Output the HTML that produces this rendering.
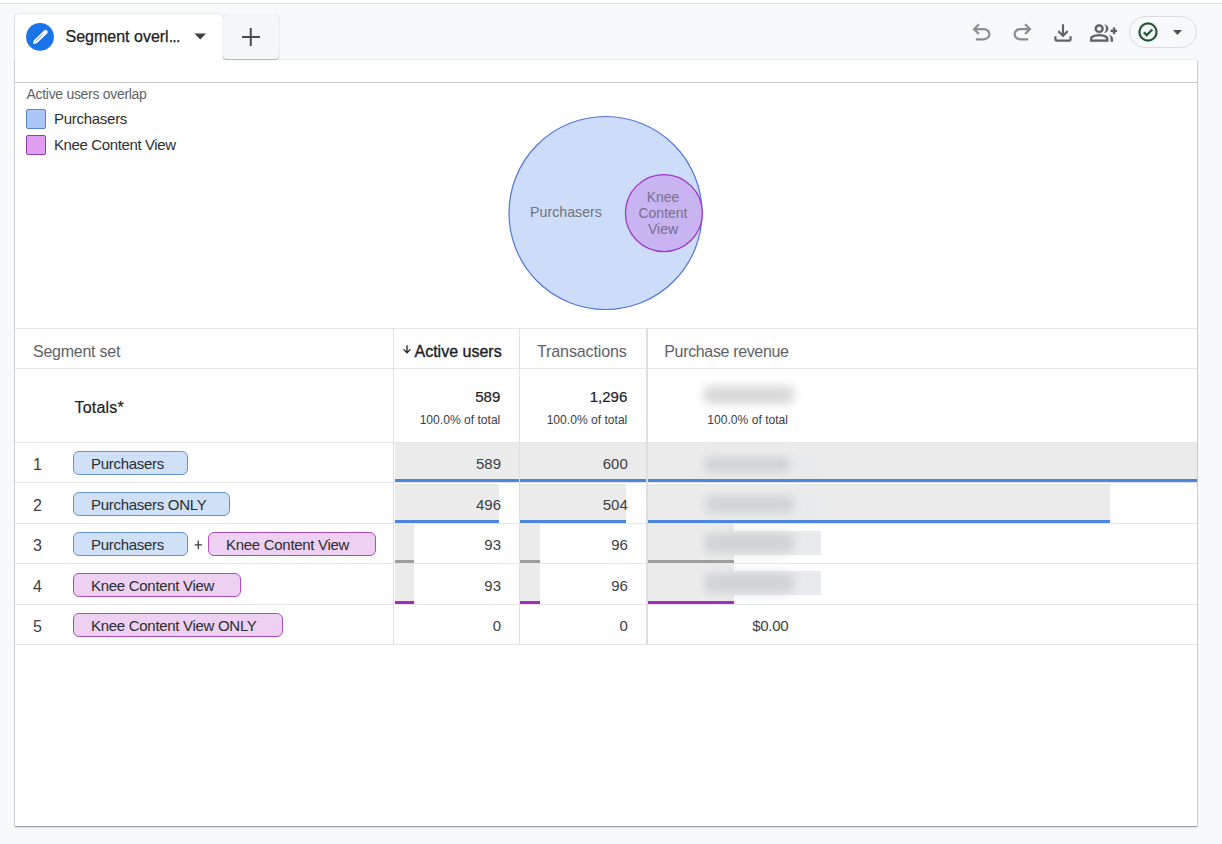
<!DOCTYPE html>
<html><head><meta charset="utf-8">
<style>
*{box-sizing:border-box;margin:0;padding:0}
html,body{width:1222px;height:844px;overflow:hidden}
body{background:#f8f9fa;font-family:"Liberation Sans",sans-serif;color:#202124;position:relative}
.abs{position:absolute}
#topwhite{left:0;top:0;width:1222px;height:3px;background:#fff}
#topline{left:0;top:3px;width:1222px;height:1px;background:#dadce0}
#tab{left:15px;top:14px;width:208px;height:46px;background:#fff;border-radius:4px 4px 0 0;box-shadow:-1px 0 0 rgba(60,64,67,.14),0 -1px 0 rgba(60,64,67,.07),1px 0 0 rgba(60,64,67,.05)}
#plus{left:223px;top:15px;width:56px;height:44px;background:#f6f7f8;border-radius:4px;box-shadow:0 0 1px rgba(60,64,67,.3),0 1px 1px rgba(60,64,67,.3)}
#card{left:15px;top:60px;width:1182px;height:766px;background:#fff;box-shadow:0 1px 1px rgba(60,64,67,.45),0 2px 2px rgba(60,64,67,.06),0 -1px 1px rgba(60,64,67,.05),-1px 0 0 rgba(60,64,67,.14),1px 0 0 rgba(60,64,67,.14)}
.t{position:absolute;white-space:nowrap;line-height:1}
.hl{position:absolute;height:1px;background:#e6e6e6}
.vl{position:absolute;width:1px;background:#e0e0e0}
.chip{position:absolute;height:23.3px;border-radius:6px;font-size:15px;letter-spacing:-0.3px;line-height:23px;padding-left:16.7px;color:#2a2d31;white-space:nowrap}
.cb{background:#d0e0f6;border:1px solid #6490da}
.cp{background:#edd0f2;border:1px solid #ad4ac6}
.num{position:absolute;font-size:15px;line-height:1;text-align:right;white-space:nowrap;color:#3c4043}
.bar{position:absolute;background:#ebebeb}
.blur{position:absolute;background:#e8eaed}
.blur i{position:absolute;left:4px;right:27px;top:2px;bottom:2px;background:#d1d3d6;filter:blur(4.5px);border-radius:8px}
</style></head><body>
<div class="abs" id="topwhite"></div>
<div class="abs" id="topline"></div>
<div class="abs" id="card"></div>

<!-- tab -->
<div class="abs" id="tab"></div>
<div class="abs" id="plus"></div>
<svg class="abs" style="left:26px;top:23px" width="28" height="28" viewBox="0 0 28 28">
  <circle cx="14" cy="13.9" r="13.9" fill="#1a73e8"/>
  <path d="M21.06 10.41 L10.82 20.21 L7.0 21.1 L7.9 17.19 L18.14 7.39 A2.1 2.1 0 0 1 21.06 10.41Z" fill="#fff"/>
  <path d="M9.4 18.3 L16.3 11.6" stroke="#5a6fb0" stroke-width="0.8"/>
</svg>
<div class="t" style="left:65.5px;top:28.5px;font-size:16px;color:#202124;-webkit-text-stroke:0.25px #202124">Segment overl<span style="letter-spacing:-0.8px">...</span></div>
<svg class="abs" style="left:194px;top:33px" width="13" height="7" viewBox="0 0 13 7"><path d="M0.5 0.5h11.5l-5.75 6z" fill="#3c4043"/></svg>
<svg class="abs" style="left:241px;top:27px" width="20" height="20" viewBox="0 0 20 20"><path d="M9.75 1v18M1 10h18" stroke="#474b4f" stroke-width="2"/></svg>

<!-- toolbar icons -->
<svg class="abs" style="left:968.4px;top:19.2px" width="27" height="27" viewBox="0 -960 960 960"><path fill="#8b8d90" d="M280-200v-80h284q63 0 109.5-40T720-420q0-60-46.5-100T564-560H312l104 104-56 56-200-200 200-200 56 56-104 104h252q97 0 166.5 63T800-420q0 94-69.5 157T564-200H280Z"/></svg>
<svg class="abs" style="left:1009px;top:19.2px" width="27" height="27" viewBox="0 -960 960 960"><path fill="#8b8d90" d="M396-200q-97 0-166.5-63T160-420q0-94 69.5-157T396-640h252L544-744l56-56 200 200-200 200-56-56 104-104H396q-63 0-109.5 40T240-420q0 60 46.5 100T396-280h284v80H396Z"/></svg>
<svg class="abs" style="left:1050px;top:19.7px" width="26" height="26" viewBox="0 -960 960 960"><path fill="#5f6368" d="M480-320 280-520l56-58 104 104v-326h80v326l104-104 56 58-200 200ZM240-160q-33 0-56.5-23.5T160-240v-120h80v120h480v-120h80v120q0 33-23.5 56.5T720-160H240Z"/></svg>
<svg class="abs" style="left:1089.8px;top:19.5px" width="27.5" height="26" viewBox="0 -960 960 960" preserveAspectRatio="none"><path fill="#5f6368" stroke="#5f6368" stroke-width="6" d="M500-482q29-32 44.5-73t15.5-85q0-44-15.5-85T500-798q60 8 100 53t40 105q0 60-40 105t-100 53Zm220 322v-120q0-36-16-68.5T662-406q51 18 94.5 46.5T800-280v120h-80Zm80-280v-80h-80v-80h80v-80h80v80h80v80h-80v80h-80Zm-480-40q-66 0-113-47t-47-113q0-66 47-113t113-47q66 0 113 47t47 113q0 66-47 113t-113 47ZM0-160v-112q0-34 17.5-62.5T64-378q62-31 126-46.5T320-440q66 0 130 15.5T576-378q29 15 46.5 43.5T640-272v112H0Zm320-400q33 0 56.5-23.5T400-640q0-33-23.5-56.5T320-720q-33 0-56.5 23.5T240-640q0 33 23.5 56.5T320-560ZM80-240h480v-32q0-11-5.5-20T540-306q-54-27-109-40.5T320-360q-56 0-111 13.5T100-306q-9 5-14.5 14T80-272v32Z"/></svg>
<div class="abs" style="left:1129px;top:16px;width:68px;height:32px;border:1px solid #dadce0;border-radius:16px"></div>
<svg class="abs" style="left:1137px;top:21px" width="22" height="22" viewBox="0 0 22 22"><circle cx="11" cy="11" r="8.6" fill="none" stroke="#1f5a35" stroke-width="2.2"/><path d="M6.8 11.2l2.9 2.9 5.6-5.6" fill="none" stroke="#1f5a35" stroke-width="2.2"/></svg>
<svg class="abs" style="left:1173.3px;top:29.6px" width="9" height="5" viewBox="0 0 9 5"><path d="M0 0h9l-4.5 5z" fill="#4d5054"/></svg>

<!-- card -->
<div class="hl" style="left:15px;top:82px;width:1182px;background:#c6c6c6"></div>

<!-- legend -->
<div class="t" style="left:26.5px;top:87.2px;font-size:14px;letter-spacing:-0.3px;color:#5f6368">Active users overlap</div>
<div class="abs" style="left:26px;top:109px;width:20px;height:20px;background:#abc7f7;border:1px solid #5584d8;border-radius:2px"></div>
<div class="t" style="left:54px;top:111px;font-size:15px;letter-spacing:-0.28px;color:#2c2f33">Purchasers</div>
<div class="abs" style="left:26px;top:135px;width:20px;height:20px;background:#df9eef;border:1px solid #9b3ab8;border-radius:2px"></div>
<div class="t" style="left:54px;top:137px;font-size:15px;letter-spacing:-0.38px;color:#2c2f33">Knee Content View</div>

<!-- venn -->
<svg class="abs" style="left:0;top:0" width="1222" height="330">
  <circle cx="605.5" cy="213" r="96.5" fill="#cddcf8" stroke="#5277dd" stroke-width="1.2"/>
  <circle cx="663.9" cy="213.1" r="38.5" fill="#c7b4f0" stroke="#a436c8" stroke-width="1.3"/>
  <text x="566" y="216.7" font-family="Liberation Sans" font-size="14.2" fill="#6f7480" text-anchor="middle">Purchasers</text>
  <text x="663" y="201.5" font-family="Liberation Sans" font-size="14" fill="#786f8e" text-anchor="middle">Knee</text>
  <text x="663" y="217.5" font-family="Liberation Sans" font-size="14" fill="#786f8e" text-anchor="middle">Content</text>
  <text x="663" y="233.5" font-family="Liberation Sans" font-size="14" fill="#786f8e" text-anchor="middle">View</text>
</svg>

<!-- table lines -->
<div class="hl" style="left:15px;top:328px;width:1182px"></div>
<div class="hl" style="left:15px;top:368px;width:1182px"></div>
<div class="hl" style="left:15px;top:442px;width:1182px"></div>
<div class="hl" style="left:15px;top:482px;width:1182px"></div>
<div class="hl" style="left:15px;top:523px;width:1182px"></div>
<div class="hl" style="left:15px;top:563px;width:1182px"></div>
<div class="hl" style="left:15px;top:604px;width:1182px"></div>
<div class="hl" style="left:15px;top:644px;width:1182px"></div>

<!-- bars -->
<div class="bar" style="left:395px;top:443px;width:802px;height:36px"></div>
<div class="abs" style="left:395px;top:479px;width:802px;height:3px;background:#4a86e0"></div>
<div class="bar" style="left:395px;top:484px;width:104px;height:36px"></div>
<div class="abs" style="left:395px;top:520px;width:104px;height:3px;background:#4a86e0"></div>
<div class="bar" style="left:520px;top:484px;width:106px;height:36px"></div>
<div class="abs" style="left:520px;top:520px;width:106px;height:3px;background:#4a86e0"></div>
<div class="bar" style="left:648px;top:484px;width:462px;height:36px"></div>
<div class="abs" style="left:648px;top:520px;width:462px;height:3px;background:#4a86e0"></div>
<div class="bar" style="left:395px;top:524px;width:19px;height:36px"></div>
<div class="abs" style="left:395px;top:560px;width:19px;height:3px;background:#9e9e9e"></div>
<div class="bar" style="left:520px;top:524px;width:20px;height:36px"></div>
<div class="abs" style="left:520px;top:560px;width:20px;height:3px;background:#9e9e9e"></div>
<div class="bar" style="left:648px;top:524px;width:86px;height:36px"></div>
<div class="abs" style="left:648px;top:560px;width:86px;height:3px;background:#9e9e9e"></div>
<div class="bar" style="left:395px;top:564px;width:19px;height:37px"></div>
<div class="abs" style="left:395px;top:601px;width:19px;height:3px;background:#a42cc4"></div>
<div class="bar" style="left:520px;top:564px;width:20px;height:37px"></div>
<div class="abs" style="left:520px;top:601px;width:20px;height:3px;background:#a42cc4"></div>
<div class="bar" style="left:648px;top:564px;width:86px;height:37px"></div>
<div class="abs" style="left:648px;top:601px;width:86px;height:3px;background:#a42cc4"></div>

<!-- vertical dividers -->
<div class="vl" style="left:393px;top:328px;height:316px"></div>
<div class="vl" style="left:519px;top:328px;height:316px"></div>
<div class="vl" style="left:646px;top:328px;height:316px;width:2px;background:#dedede"></div>

<!-- header -->
<div class="t" style="left:33px;top:344px;font-size:16px;letter-spacing:-0.25px;color:#5f6368">Segment set</div>
<svg class="abs" style="left:402px;top:344.5px" width="10" height="10" viewBox="0 0 10 10"><path d="M5 0.3v7.4M1.6 4.4l3.4 3.4 3.4-3.4" fill="none" stroke="#202124" stroke-width="1.3"/></svg>
<div class="t" style="left:414.5px;top:344px;font-size:16px;color:#202124;-webkit-text-stroke:0.35px #202124">Active users</div>
<div class="t" style="left:537px;top:343px;font-size:16.1px;letter-spacing:-0.15px;color:#5f6368">Transactions</div>
<div class="t" style="left:664.3px;top:343.8px;font-size:16px;letter-spacing:-0.35px;color:#5f6368">Purchase revenue</div>

<!-- totals -->
<div class="t" style="left:74.5px;top:400px;font-size:16px;color:#202124;-webkit-text-stroke:0.2px #202124;letter-spacing:0.2px">Totals*</div>
<div class="num" style="right:721.7px;top:389px;font-size:15px;color:#202124;-webkit-text-stroke:0.2px #202124">589</div>
<div class="num" style="right:594.7px;top:389px;font-size:15px;color:#202124;-webkit-text-stroke:0.2px #202124">1,296</div>
<div class="num" style="right:721.7px;top:414px;font-size:12.1px;color:#3c4043">100.0% of total</div>
<div class="num" style="right:594.7px;top:414px;font-size:12.1px;color:#3c4043">100.0% of total</div>
<div class="num" style="right:434px;top:414px;font-size:12.1px;color:#3c4043">100.0% of total</div>
<div class="blur" style="left:699px;top:383px;width:100px;height:24px;background:#fff"><i style="left:4px;right:4px;top:3px;bottom:3px;background:#d9d9da;filter:blur(5px)"></i></div>

<!-- rows -->
<div class="t" style="left:33px;top:457px;font-size:16px;color:#3c4043">1</div>
<div class="chip cb" style="left:73.4px;top:451.3px;width:114.2px">Purchasers</div>
<div class="num" style="right:721px;top:456px">589</div>
<div class="num" style="right:594.2px;top:456px">600</div>
<div class="blur" style="left:700px;top:455px;width:118px;height:19px"><i></i></div>

<div class="t" style="left:33px;top:498px;font-size:16px;color:#3c4043">2</div>
<div class="chip cb" style="left:73.4px;top:492.3px;width:156.2px">Purchasers ONLY</div>
<div class="num" style="right:721px;top:497px">496</div>
<div class="num" style="right:594.2px;top:497px">504</div>
<div class="blur" style="left:701px;top:494px;width:120px;height:21px"><i></i></div>

<div class="t" style="left:33px;top:538px;font-size:16px;color:#3c4043">3</div>
<div class="chip cb" style="left:73.4px;top:532.3px;width:114.2px">Purchasers</div>
<svg class="abs" style="left:194px;top:540px" width="9" height="10" viewBox="0 0 9 10"><path d="M4.3 0.6v8.6M0.6 4.9h7.4" stroke="#3c4043" stroke-width="1.3"/></svg>
<div class="chip cp" style="left:208.4px;top:532.3px;width:167.2px">Knee Content View</div>
<div class="num" style="right:721px;top:537px">93</div>
<div class="num" style="right:594.2px;top:537px">96</div>
<div class="blur" style="left:701px;top:531px;width:120px;height:24px"><i></i></div>

<div class="t" style="left:33px;top:579px;font-size:16px;color:#3c4043">4</div>
<div class="chip cp" style="left:73.4px;top:573.3px;width:167.2px">Knee Content View</div>
<div class="num" style="right:721px;top:578px">93</div>
<div class="num" style="right:594.2px;top:578px">96</div>
<div class="blur" style="left:701px;top:571px;width:120px;height:24px"><i></i></div>

<div class="t" style="left:33px;top:619px;font-size:16px;color:#3c4043">5</div>
<div class="chip cp" style="left:73.4px;top:613.3px;width:209.2px">Knee Content View ONLY</div>
<div class="num" style="right:721px;top:618px">0</div>
<div class="num" style="right:594.2px;top:618px">0</div>
<div class="num" style="right:433.7px;top:618px;letter-spacing:-0.3px">$0.00</div>
</body></html>
